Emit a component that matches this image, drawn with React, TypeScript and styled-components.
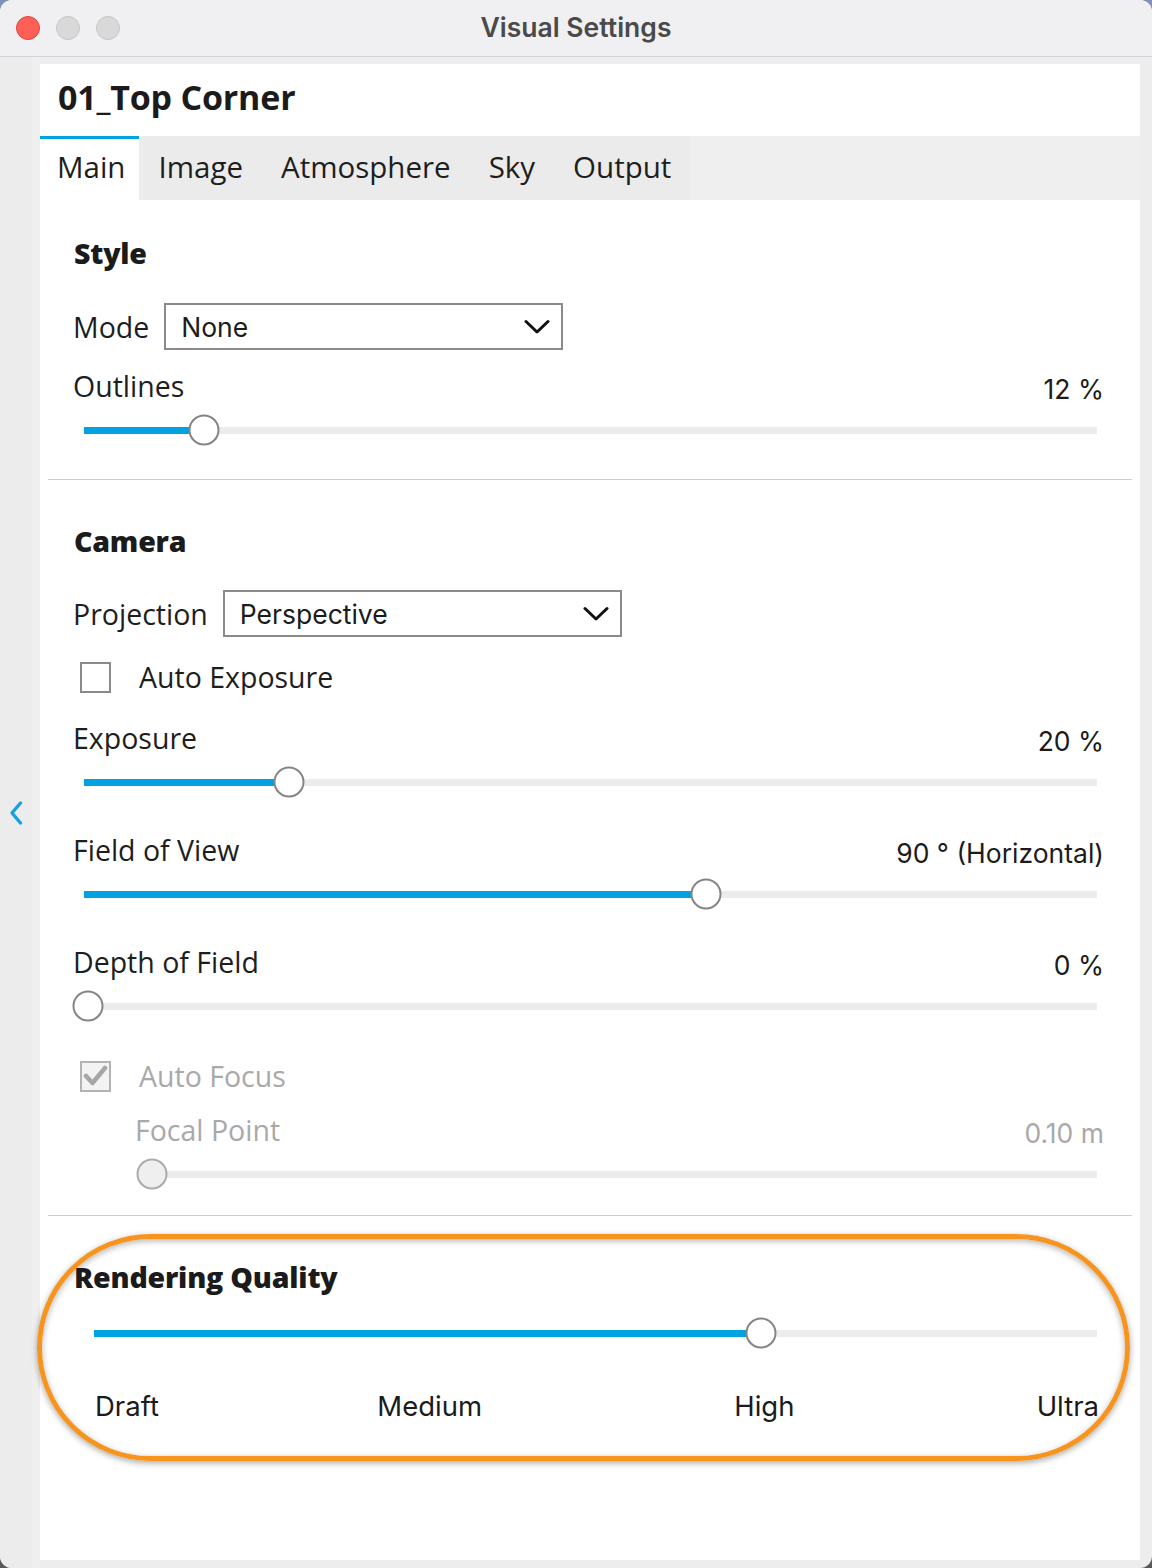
import React from "react";
import styled, { createGlobalStyle } from "styled-components";

const LABEL_FONT = `"Open Sans", "Noto Sans", sans-serif`;
const VALUE_FONT = `Inter, "Noto Sans", sans-serif`;
const BLUE = "#00a3e0";

const GlobalStyle = createGlobalStyle`
  html, body { margin: 0; padding: 0; height: 1568px; overflow: hidden; }
  body {
    background: linear-gradient(180deg, #8190b6 0%, #8190b6 50%, #5d5557 50%, #5d5557 100%);
    font-family: ${LABEL_FONT};
  }
`;

const Window = styled.div`
  width: 1152px;
  height: 1568px;
  display: flex;
  flex-direction: column;
  background: #ededed;
  border-radius: 12px;
  overflow: hidden;
`;

const TitleBar = styled.div`
  height: 56px;
  flex: none;
  display: grid;
  grid-template-columns: 1fr auto 1fr;
  align-items: center;
  background: #f0f0f2;
  border-bottom: 1px solid #d3d3d5;
`;

const Lights = styled.div`
  display: flex;
  gap: 16px;
  padding-left: 16px;
`;

const Light = styled.span<{ $color: string; $border: string }>`
  width: 24px;
  height: 24px;
  border-radius: 50%;
  box-sizing: border-box;
  background: ${(p) => p.$color};
  border: 1px solid ${(p) => p.$border};
`;

const WindowTitle = styled.div`
  font-family: ${VALUE_FONT};
  font-weight: 600;
  font-size: 26.5px;
  color: #4a4a4a;
  margin-top: -2px;
`;

const Body = styled.div`
  flex: 1;
  display: flex;
  min-height: 0;
`;

const LeftRail = styled.div`
  width: 40px;
  flex: none;
  display: flex;
  align-items: center;
  justify-content: flex-start;
  padding-left: 9px;
  box-sizing: border-box;
  background: linear-gradient(90deg, #ececec 0, #ececec 32px, #efefef 32px);
`;

const Panel = styled.div`
  flex: 1;
  margin: 7px 12px 8px 0;
  background: #ffffff;
  display: flex;
  flex-direction: column;
`;

const Header = styled.div`
  height: 72px;
  display: flex;
  align-items: center;
  padding-left: 18px;
  padding-bottom: 6px;
  box-sizing: border-box;
  font-family: ${LABEL_FONT};
  font-weight: 700;
  font-size: 34px;
  color: #1b1b1b;
  letter-spacing: -0.2px;
`;

const TabBar = styled.div`
  height: 64px;
  display: flex;
  background: #efefef;
`;

const Tab = styled.div<{ $active?: boolean }>`
  display: flex;
  align-items: center;
  padding: ${(p) => (p.$active ? "0 14px 6px 17px" : "0 19px 6px 19px")};
  box-sizing: border-box;
  font-family: ${LABEL_FONT};
  font-size: 29.5px;
  font-weight: 400;
  color: #1e1e1e;
  background: ${(p) => (p.$active ? "#ffffff" : "#ebebeb")};
  border-top: 3px solid ${(p) => (p.$active ? BLUE : "transparent")};
`;

const Content = styled.div`
  display: flex;
  flex-direction: column;
  padding: 0 36px 0 34px;
`;

const SectionTitle = styled.div<{ $mt: number }>`
  margin-top: ${(p) => p.$mt}px;
  height: 36px;
  display: flex;
  align-items: center;
  font-family: ${LABEL_FONT};
  font-weight: 800;
  font-size: 28.5px;
  color: #1b1b1b;
  letter-spacing: -0.2px;
`;

const SelectRow = styled.div<{ $mt: number }>`
  margin-top: ${(p) => p.$mt}px;
  display: flex;
  align-items: center;
  gap: 15px;
`;

const Label = styled.span<{ $disabled?: boolean }>`
  font-family: ${LABEL_FONT};
  font-size: 28.5px;
  margin-left: -1px;
  color: ${(p) => (p.$disabled ? "#a9a9a9" : "#1e1e1e")};
`;

const SelectBox = styled.div`
  width: 399px;
  height: 47px;
  box-sizing: border-box;
  border: 2px solid #8a8a8a;
  display: flex;
  align-items: center;
  justify-content: space-between;
  padding: 0 11px 0 15px;
  font-family: ${VALUE_FONT};
  font-size: 26.5px;
  color: #1b1b1b;
`;

const ValueRow = styled.div<{ $mt: number; $indent?: number }>`
  margin-top: ${(p) => p.$mt}px;
  height: 36px;
  padding-left: ${(p) => p.$indent ?? 0}px;
  display: flex;
  align-items: baseline;
  justify-content: space-between;
`;

const Value = styled.span<{ $disabled?: boolean }>`
  font-family: ${VALUE_FONT};
  font-size: 26.5px;
  color: ${(p) => (p.$disabled ? "#a9a9a9" : "#1b1b1b")};
  position: relative;
  top: 2px;
`;

const CheckRow = styled.div<{ $mt: number }>`
  margin-top: ${(p) => p.$mt}px;
  height: 36px;
  display: flex;
  align-items: center;
  gap: 29px;
  padding-left: 6px;
`;

const Box = styled.span<{ $disabled?: boolean }>`
  width: 31px;
  height: 31px;
  box-sizing: border-box;
  border: 2px solid ${(p) => (p.$disabled ? "#b3b3b3" : "#8a8a8a")};
  background: ${(p) => (p.$disabled ? "#f3f3f3" : "#ffffff")};
  display: flex;
  align-items: center;
  justify-content: center;
`;

const SliderWrap = styled.div<{ $mt: number; $left: number; $right: number }>`
  margin-top: ${(p) => p.$mt}px;
  height: 30px;
  padding: 0 ${(p) => p.$right}px 0 ${(p) => p.$left}px;
  display: flex;
  align-items: center;
`;

const Track = styled.div`
  position: relative;
  flex: 1;
  height: 7px;
  background: #ececec;
`;

const Fill = styled.div<{ $pct: number }>`
  position: absolute;
  left: 0;
  top: 0;
  height: 100%;
  width: ${(p) => p.$pct}%;
  background: ${BLUE};
`;

const Thumb = styled.div<{ $pct: number; $disabled?: boolean }>`
  position: absolute;
  top: 50%;
  left: ${(p) => p.$pct}%;
  width: 31px;
  height: 31px;
  box-sizing: border-box;
  border-radius: 50%;
  transform: translate(-50%, -50%);
  background: ${(p) => (p.$disabled ? "#efefef" : "#ffffff")};
  border: 2px solid ${(p) => (p.$disabled ? "#ababab" : "#858585")};
`;

const Divider = styled.div<{ $mt: number }>`
  margin: ${(p) => p.$mt}px -28px 0 -26px;
  height: 1px;
  background: #cccccc;
`;

const QualitySection = styled.div`
  position: relative;
  display: flex;
  flex-direction: column;
`;

const Annotation = styled.div`
  position: absolute;
  top: 18px;
  left: -37px;
  width: 1093px;
  height: 227px;
  box-sizing: border-box;
  border: 5px solid #f7941d;
  border-radius: 114px;
  box-shadow: 0 2px 6px rgba(0, 0, 0, 0.35), inset 0 2px 6px rgba(0, 0, 0, 0.3);
  pointer-events: none;
`;

const TickLabels = styled.div`
  margin-top: 40px;
  height: 36px;
  padding: 0 5px 0 21px;
  display: grid;
  grid-template-columns: repeat(6, 1fr);
  align-items: center;
`;

const Tick = styled.span<{ $col: string; $align: string }>`
  grid-column: ${(p) => p.$col};
  justify-self: ${(p) => p.$align};
  font-family: ${VALUE_FONT};
  font-size: 27.5px;
  color: #1b1b1b;
`;

const Chevron = () => (
  <svg width="26" height="16" viewBox="0 0 26 16">
    <path d="M2 2.5 L13 13 L24 2.5" fill="none" stroke="#111" strokeWidth="3" strokeLinecap="round" strokeLinejoin="round" />
  </svg>
);

const Select = ({ value }: { value: string }) => (
  <SelectBox>
    <span>{value}</span>
    <Chevron />
  </SelectBox>
);

const Check = ({ checked, disabled }: { checked?: boolean; disabled?: boolean }) => (
  <Box $disabled={disabled}>
    {checked && (
      <svg width="25" height="22" viewBox="0 0 25 22">
        <path d="M3 11 L9.5 18 L22 3" fill="none" stroke="#a6a6a6" strokeWidth="4.5" strokeLinecap="round" strokeLinejoin="round" />
      </svg>
    )}
  </Box>
);

const Slider = ({
  mt,
  left,
  right = 7,
  pct,
  disabled,
}: {
  mt: number;
  left: number;
  right?: number;
  pct: number;
  disabled?: boolean;
}) => (
  <SliderWrap $mt={mt} $left={left} $right={right}>
    <Track>
      {!disabled && <Fill $pct={pct} />}
      <Thumb $pct={pct} $disabled={disabled} />
    </Track>
  </SliderWrap>
);

export default function App() {
  return (
    <>
      <GlobalStyle />
      <Window>
        <TitleBar>
          <Lights>
            <Light $color="#fe5f57" $border="#e0443e" />
            <Light $color="#d9d9d9" $border="#c6c6c6" />
            <Light $color="#d9d9d9" $border="#c6c6c6" />
          </Lights>
          <WindowTitle>Visual Settings</WindowTitle>
          <span />
        </TitleBar>
        <Body>
          <LeftRail>
            <svg width="14" height="26" viewBox="0 0 14 26">
              <path d="M11.5 3 L3 13 L11.5 23" fill="none" stroke="#1a9fe0" strokeWidth="3.4" strokeLinecap="round" strokeLinejoin="round" />
            </svg>
          </LeftRail>
          <Panel>
            <Header>01_Top Corner</Header>
            <TabBar>
              <Tab $active>Main</Tab>
              <Tab>Image</Tab>
              <Tab>Atmosphere</Tab>
              <Tab>Sky</Tab>
              <Tab>Output</Tab>
            </TabBar>
            <Content>
              <SectionTitle $mt={35}>Style</SectionTitle>
              <SelectRow $mt={32}>
                <Label>Mode</Label>
                <Select value="None" />
              </SelectRow>
              <ValueRow $mt={17}>
                <Label>Outlines</Label>
                <Value>12 %</Value>
              </ValueRow>
              <Slider mt={12} left={10} pct={11.85} />

              <Divider $mt={34} />

              <SectionTitle $mt={43}>Camera</SectionTitle>
              <SelectRow $mt={31}>
                <Label>Projection</Label>
                <Select value="Perspective" />
              </SelectRow>
              <CheckRow $mt={22}>
                <Check />
                <Label>Auto Exposure</Label>
              </CheckRow>
              <ValueRow $mt={24}>
                <Label>Exposure</Label>
                <Value>20 %</Value>
              </ValueRow>
              <Slider mt={12} left={10} pct={20.2} />
              <ValueRow $mt={34}>
                <Label>Field of View</Label>
                <Value>90 ° (Horizontal)</Value>
              </ValueRow>
              <Slider mt={12} left={10} pct={61.4} />
              <ValueRow $mt={34}>
                <Label>Depth of Field</Label>
                <Value>0 %</Value>
              </ValueRow>
              <Slider mt={12} left={10} pct={0.4} />
              <CheckRow $mt={37}>
                <Check checked disabled />
                <Label $disabled>Auto Focus</Label>
              </CheckRow>
              <ValueRow $mt={17} $indent={62}>
                <Label $disabled>Focal Point</Label>
                <Value $disabled>0.10 m</Value>
              </ValueRow>
              <Slider mt={12} left={74} pct={0.42} disabled />

              <Divider $mt={26} />

              <QualitySection>
                <Annotation />
                <SectionTitle $mt={43}>Rendering Quality</SectionTitle>
                <Slider mt={23} left={20} pct={66.5} />
                <TickLabels>
                  <Tick $col="1" $align="start">Draft</Tick>
                  <Tick $col="2 / span 2" $align="center">Medium</Tick>
                  <Tick $col="4 / span 2" $align="center">High</Tick>
                  <Tick $col="6" $align="end">Ultra</Tick>
                </TickLabels>
              </QualitySection>
            </Content>
          </Panel>
        </Body>
      </Window>
    </>
  );
}
